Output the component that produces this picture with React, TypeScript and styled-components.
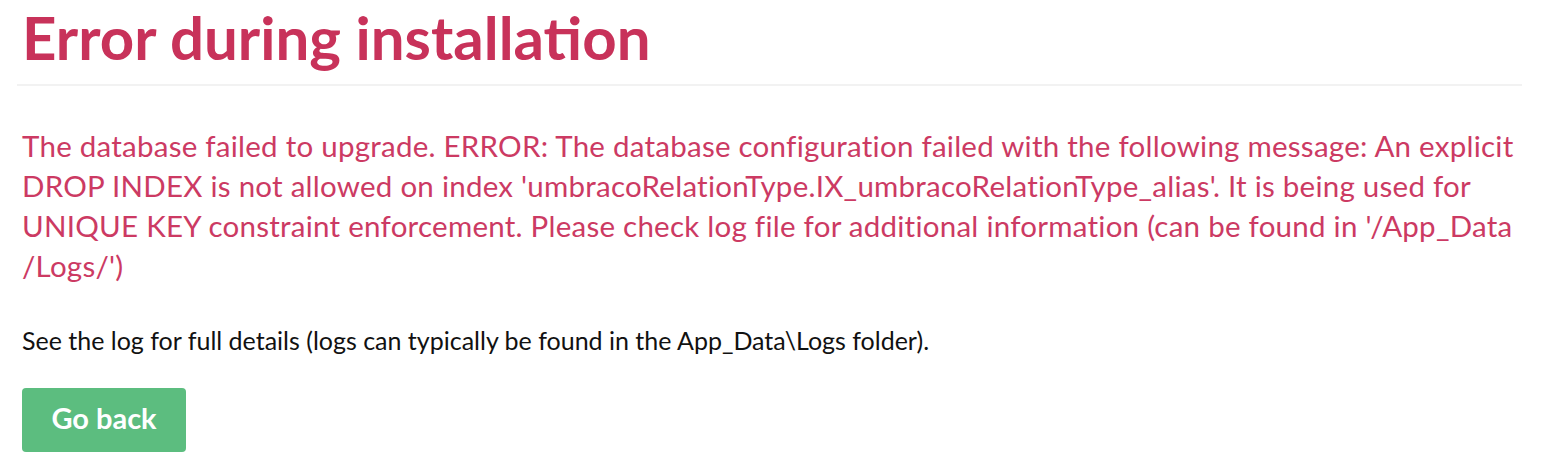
import styled, { createGlobalStyle } from 'styled-components';

const GlobalStyle = createGlobalStyle`
  html, body {
    margin: 0;
    padding: 0;
    background: #ffffff;
  }
  body {
    font-family: Lato, "Open Sans", sans-serif;
  }
`;

const Page = styled.div`
  width: 1505px;
  padding: 0 0 0 17px;
`;

const Title = styled.h1`
  margin: 0;
  padding: 4px 0 14px 5px;
  font-size: 60px;
  font-weight: 700;
  line-height: 66px;
  color: #c8325a;
  border-bottom: 2px solid #f2f2f2;
`;

const ErrorMessage = styled.p`
  margin: 0;
  padding: 40px 0 0 5px;
  font-size: 29.5px;
  letter-spacing: 0.25px;
  line-height: 40px;
  color: #cc3a63;
`;

const Details = styled.p`
  margin: 0;
  padding: 39px 0 0 5px;
  font-size: 25px;
  line-height: 30px;
  color: #111111;
`;

const BackButton = styled.button`
  display: block;
  margin: 33px 0 0 5px;
  padding: 0 0 6px;
  width: 164px;
  height: 64px;
  border: none;
  border-radius: 4px;
  background: #5cbd7f;
  color: #ffffff;
  font-family: Lato, "Open Sans", sans-serif;
  font-size: 29px;
  font-weight: 700;
  cursor: pointer;
`;

export default function App() {
  return (
    <Page>
      <GlobalStyle />
      <Title>Error during installation</Title>
      <ErrorMessage>
        The database failed to upgrade. ERROR: The database configuration failed with the following message: An explicit
        <br />
        DROP INDEX is not allowed on index 'umbracoRelationType.IX_umbracoRelationType_alias'. It is being used for
        <br />
        UNIQUE KEY constraint enforcement. Please check log file for additional information (can be found in '/App_Data
        <br />
        /Logs/')
      </ErrorMessage>
      <Details>See the log for full details (logs can typically be found in the App_Data\Logs folder).</Details>
      <BackButton>Go back</BackButton>
    </Page>
  );
}
